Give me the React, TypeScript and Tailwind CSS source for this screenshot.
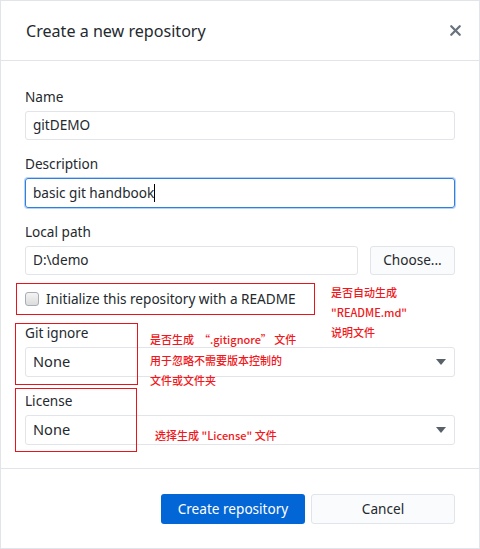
import { X } from 'lucide-react'

const ui = { fontFamily: '"Noto Sans", "Open Sans", sans-serif' }
const cjk = { fontFamily: '"Noto Sans CJK SC", "Noto Sans", sans-serif' }

function Caret() {
  return (
    <svg width="10" height="6" viewBox="0 0 10 6" className="shrink-0">
      <path d="M0 0h10L5 6z" fill="#586069" />
    </svg>
  )
}

function Field({ label, children }: { label: string; children: React.ReactNode }) {
  return (
    <div className="flex flex-col">
      <label className="h-[20px] text-[13.6px] leading-[20px] text-[#24292e] mb-[4px]">{label}</label>
      {children}
    </div>
  )
}

function Select({ value }: { value: string }) {
  return (
    <div className="h-[30px] rounded-[3px] border border-[#e1e4e8] bg-white flex items-center justify-between pl-[7px] pr-[8px] text-[14.6px] text-[#24292e]">
      <span>{value}</span>
      <Caret />
    </div>
  )
}

export default function App() {
  return (
    <div className="relative w-[480px] h-[549px] bg-white border border-[#e1e4e8] flex flex-col" style={ui}>
      {/* Header */}
      <header className="h-[60px] shrink-0 border-b border-[#e1e4e8] flex items-center justify-between pl-[25px] pr-[15px]">
        <h1 className="text-[16.1px] text-[#24292e] mt-[2px]">Create a new repository</h1>
        <X className="w-[17px] h-[17px] text-[#6a737d]" strokeWidth={3.2} />
      </header>

      {/* Body */}
      <main className="flex-1 px-[24px] pt-[26px] flex flex-col">
        <Field label="Name">
          <div className="h-[29px] rounded-[3px] border border-[#e1e4e8] flex items-center px-[7px] text-[13.6px] text-[#24292e]">
            gitDEMO
          </div>
        </Field>

        <div className="mt-[14px]">
          <Field label="Description">
            <div className="h-[30px] rounded-[3px] border border-[#2f7fe0] shadow-[0_0_0_1px_rgba(47,127,224,0.35)] flex items-center px-[7px] text-[13.6px] text-[#24292e]">
              basic git handbook
              <span className="w-px h-[18px] bg-black" />
            </div>
          </Field>
        </div>

        <div className="mt-[14px]">
          <Field label="Local path">
            <div className="flex gap-[12px]">
              <div className="flex-1 h-[29px] rounded-[3px] border border-[#e1e4e8] flex items-center px-[7px] text-[13.6px] text-[#24292e]">
                D:\demo
              </div>
              <button className="w-[85px] h-[29px] rounded-[3px] border border-[#e1e4e8] bg-[#fafbfc] text-[13.6px] text-[#24292e]">
                Choose...
              </button>
            </div>
          </Field>
        </div>

        <div className="h-[48px] flex items-center gap-[7px]">
          <span className="w-[14px] h-[14px] rounded-[3px] border border-[#a8adb3] bg-gradient-to-b from-[#f4f4f4] to-[#dcdcdc]" />
          <span className="text-[13.6px] text-[#24292e]">Initialize this repository with a README</span>
        </div>

        <Field label="Git ignore">
          <Select value="None" />
        </Field>

        <div className="mt-[14px]">
          <Field label="License">
            <Select value="None" />
          </Field>
        </div>
      </main>

      {/* Footer */}
      <footer className="h-[80px] shrink-0 border-t border-[#e1e4e8] flex justify-end items-start pt-[25px] pr-[24px] gap-[6px]">
        <button className="w-[144px] h-[30px] rounded-[3px] bg-[#0366d6] text-white text-[13.6px]">Create repository</button>
        <button className="w-[144px] h-[30px] rounded-[3px] border border-[#e1e4e8] bg-[#fafbfc] text-[#24292e] text-[13.6px]">
          Cancel
        </button>
      </footer>

      {/* Annotations */}
      <div className="absolute left-[15px] top-[282px] w-[299px] h-[32px] border border-[#e8141c]" />
      <div className="absolute left-[14px] top-[322px] w-[123px] h-[62px] border border-[#e8141c]" />
      <div className="absolute left-[14px] top-[387px] w-[122px] h-[64px] border border-[#e8141c]" />

      <div className="absolute left-[330px] top-[281px] text-[11px] leading-[20px] text-[#f01820] font-medium" style={cjk}>
        <div>是否自动生成</div>
        <div>"README.md"</div>
        <div>说明文件</div>
      </div>
      <div className="absolute left-[149px] top-[328px] text-[11px] leading-[20.5px] text-[#f01820] font-medium" style={cjk}>
        <div>是否生成&nbsp;&nbsp;“.gitignore”&nbsp;文件</div>
        <div>用于忽略不需要版本控制的</div>
        <div>文件或文件夹</div>
      </div>
      <div className="absolute left-[154px] top-[424px] text-[11px] leading-[20px] text-[#f01820] font-medium" style={cjk}>
        选择生成 "License" 文件
      </div>
    </div>
  )
}
